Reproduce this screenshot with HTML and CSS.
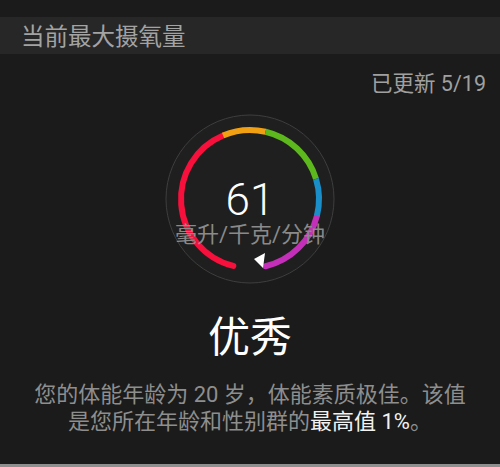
FILE: index.html
```html
<!DOCTYPE html>
<html lang="zh-CN">
<head>
    <meta charset="UTF-8">
    <meta name="viewport" content="width=device-width, initial-scale=1.0">
    <title>当前最大摄氧量</title>
    <link rel="stylesheet" href="styles.css">
</head>
<body>

<div class="screen">
    <div class="title-bar">当前最大摄氧量</div>

    <div class="updated">已更新 5/19</div>

    <div class="gauge">
        <svg class="gauge-ring" width="170" height="170" viewBox="0 0 170 170">
            <circle cx="85" cy="85" r="84" fill="#1f1f1f" stroke="#3e3e3e" stroke-width="1"/>
            <!-- ends first, with round caps -->
            <path d="M68.31 151.95 A69 69 0 0 1 58.04 21.49" stroke="#f7103c" stroke-width="6" fill="none" stroke-linecap="round"/>
            <path d="M151.95 101.69 A69 69 0 0 1 100.52 152.23" stroke="#c42fb9" stroke-width="6" fill="none" stroke-linecap="round"/>
            <path d="M58.04 21.49 A69 69 0 0 1 100.52 17.77" stroke="#f0a012" stroke-width="6" fill="none"/>
            <path d="M100.52 17.77 A69 69 0 0 1 150.98 64.82" stroke="#5cb81d" stroke-width="6" fill="none"/>
            <path d="M150.98 64.82 A69 69 0 0 1 151.95 101.69" stroke="#198ec9" stroke-width="6" fill="none"/>
            <polygon points="89,145 100,139 98,154" fill="#ffffff"/>
        </svg>
        <div class="gauge-text">
            <div class="value">61</div>
            <div class="unit">毫升/千克/分钟</div>
        </div>
    </div>

    <div class="rating">优秀</div>

    <p class="summary">您的体能年龄为 20 岁，体能素质极佳。该值<br>是您所在年龄和性别群的<span class="hl">最高值 1%</span>。</p>

    <div class="bottom-edge"></div>
</div>

</body>
</html>
```

FILE: styles.css
```css
* {
    margin: 0;
    padding: 0;
    box-sizing: border-box;
}

body {
    background-color: #1b1b1b;
    font-family: Roboto, "Noto Sans CJK SC", sans-serif;
    color: #8e8e8e;
    width: 500px;
    height: 467px;
    overflow: hidden;
}

.screen {
    display: flex;
    flex-direction: column;
    height: 467px;
    padding-top: 17px;
}

.title-bar {
    height: 37px;
    padding: 3px 0 0 21px;
    line-height: 34px;
    background-color: #272727;
    color: #a3a3a3;
    font-size: 23.5px;
}

.updated {
    margin-top: 18px;
    padding-right: 14px;
    line-height: 24px;
    text-align: right;
    font-size: 21.5px;
    color: #a0a0a0;
}

.gauge {
    display: grid;
    width: 170px;
    height: 170px;
    margin: 18px auto 0;
}

.gauge-ring,
.gauge-text {
    grid-area: 1 / 1;
}

.gauge-text {
    display: flex;
    flex-direction: column;
    align-items: center;
    padding-top: 64px;
}

.value {
    font-size: 44px;
    line-height: 44px;
    font-weight: 300;
    color: #ffffff;
}

.unit {
    margin-top: 2px;
    font-size: 22px;
    line-height: 21px;
    color: #8a8a8a;
    white-space: nowrap;
}

.rating {
    margin-top: 30px;
    text-align: center;
    font-size: 42px;
    line-height: 48px;
    color: #ffffff;
}

.summary {
    margin-top: 19px;
    text-align: center;
    font-size: 22px;
    line-height: 27px;
}

.hl {
    color: #f2f2f2;
}

.bottom-edge {
    margin-top: auto;
    height: 3px;
    background-color: #8f8f8f;
}
```
